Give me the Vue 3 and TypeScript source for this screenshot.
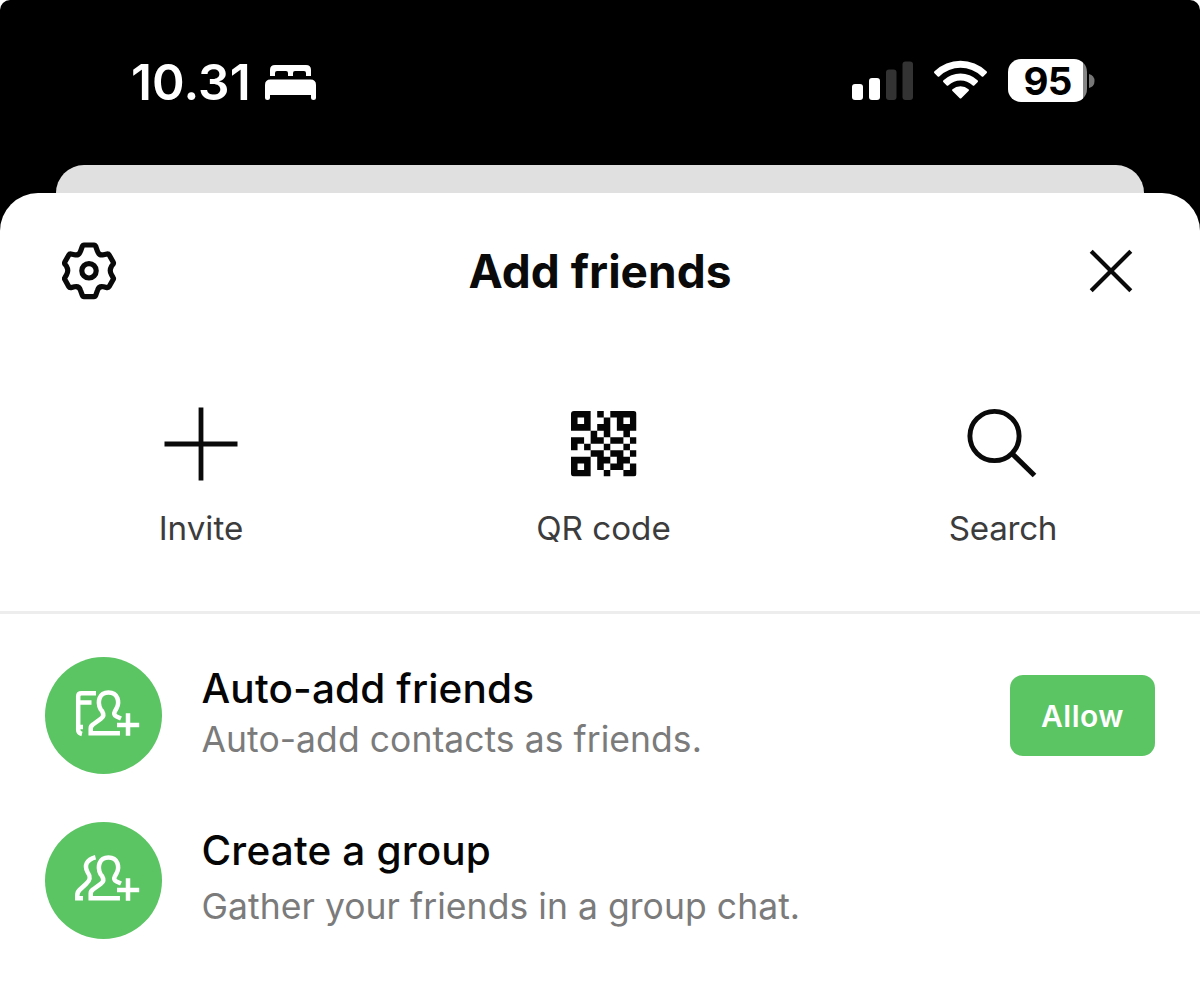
<script setup lang="ts">
interface Row {
  icon: 'book' | 'group'
  title: string
  text: string
  action?: string
}

const rows: Row[] = [
  { icon: 'book', title: 'Auto-add friends', text: 'Auto-add contacts as friends.', action: 'Allow' },
  { icon: 'group', title: 'Create a group', text: 'Gather your friends in a group chat.' },
]

const qrPattern = [
  '###.#.####',
  '#.#..#.#.#',
  '###.##.###',
  '...#.#..#.',
  '##.##.##.#',
  '#.#..#..#.',
  '...##.##.#',
  '###.##.##.',
  '#.#.#.##.#',
  '###..#..##',
]
const qrPath = qrPattern
  .flatMap((line, y) => [...line].map((c, x) => (c === '#' ? `M${x} ${y}h1v1h-1z` : '')))
  .join('')
</script>

<template>
  <div class="screen">
    <header class="status">
      <div class="clock">
        <span class="time">10.31</span>
        <svg class="bed" width="52" height="37" viewBox="0 0 52 37">
          <path fill="#fff" d="M5 12V6Q5 1 10 1H41Q46 1 46 6V12H41V9Q41 7 39 7H30Q28 7 28 9V12H23V9Q23 7 21 7H12Q10 7 10 9V12ZM0 33.500V21Q0 15.500 5.500 15.500H45.500Q51 15.500 51 21V33.500Q51 36 48.500 36T46 33.500V31H5V33.500Q5 36 2.500 36T0 33.500Z" />
        </svg>
      </div>
      <div class="signals">
        <svg width="62" height="40" viewBox="0 0 62 40">
          <rect x="0" y="23" width="11" height="16" rx="3" fill="#fff" />
          <rect x="17" y="17" width="11" height="22" rx="3" fill="#fff" />
          <rect x="34" y="8.500" width="10.500" height="30.500" rx="3" fill="#333" />
          <rect x="50.500" y="0.500" width="10.500" height="38.500" rx="3" fill="#333" />
        </svg>
        <svg class="wifi" width="54" height="40" viewBox="0.500 0 54 40">
          <path fill="#fff" d="M1 13.200Q0 12.200 1 11.200A37.500 37.500 0 0 1 53 11.200Q54 12.200 53 13.200L50 16.200Q49 17.200 48 16.200A30.500 30.500 0 0 0 6 16.200Q5 17.200 4 16.200ZM10 22.200Q9 21.200 10 20.200A25 25 0 0 1 44 20.200Q45 21.200 44 22.200L41 25.200Q40 26.200 39 25.200A17.500 17.500 0 0 0 15 25.200Q14 26.200 13 25.200ZM19 31Q18 30 19 29.200A12 12 0 0 1 35 29.200Q36 30 35 31L28 38Q27 39 26 38Z" />
        </svg>
        <div class="battery"><span>95</span></div>
        <svg class="cap" width="6" height="14" viewBox="0 0 6 14"><path fill="#777" d="M0 0Q5.500 1.500 5.500 7T0 14Z" /></svg>
      </div>
    </header>
    <div class="behind"></div>
    <main class="sheet">
      <div class="titlebar">
        <svg class="gear" width="55" height="58" viewBox="0.500 0.200 55 58" fill="none" stroke="#0a0a0a" stroke-width="5.200" stroke-linejoin="round">
          <path d="M22.500 3.200H32.500Q33.700 3.200 34.200 4.500L36 9.500Q37.500 14 42 13L45.500 12.200Q47 12 47.700 13.200L51.800 20.500Q52.300 21.500 51.500 22.500L50 24.500Q47.500 28.700 50 33L51.500 35.500Q52.300 36.500 51.800 37.500L47.700 44.800Q47 46 45.500 45.800L42 45Q37.500 44 36 48.500L34.200 53.500Q33.700 54.800 32.500 54.800H22.500Q21.300 54.800 20.800 53.500L19 48.500Q17.500 44 13 45L9.500 45.800Q8 46 7.300 44.800L3.200 37.500Q2.700 36.500 3.500 35.500L5 33Q7.500 28.700 5 24.500L3.500 22.500Q2.700 21.500 3.200 20.500L7.300 13.200Q8 12 9.500 12.200L13 13Q17.500 14 19 9.500L20.800 4.500Q21.300 3.200 22.500 3.200Z" />
          <circle cx="27.500" cy="29" r="7.200" />
        </svg>
        <h1>Add friends</h1>
        <svg class="close" width="44" height="44" viewBox="0 0 44 44" stroke="#0a0a0a" stroke-width="4.200">
          <path d="M2.200 2.200L41.800 41.800M41.800 2.200L2.200 41.800" />
        </svg>
      </div>
      <nav class="tools">
        <div class="tool">
          <svg width="74" height="74" viewBox="0 0 74 74" stroke="#0a0a0a" stroke-width="4.800"><path d="M37 0.500V73.500M0.500 37H73.500" /></svg>
          <span>Invite</span>
        </div>
        <div class="tool qr">
          <svg width="74" height="74" viewBox="0 0 74 74">
            <defs><clipPath id="qr-round"><rect x="4" y="4" width="65.500" height="65.500" rx="3" /></clipPath></defs>
            <g clip-path="url(#qr-round)"><path transform="translate(4 4) scale(6.550)" :d="qrPath" fill="#050505" /></g>
          </svg>
          <span>QR code</span>
        </div>
        <div class="tool search">
          <svg width="74" height="74" viewBox="0.500 0 74 74" fill="none" stroke="#0a0a0a" stroke-width="4.900"><circle cx="29" cy="29" r="24.600" /><path d="M46.500 46.500L69 68.500" stroke-width="5.200" /></svg>
          <span>Search</span>
        </div>
      </nav>
      <section class="list">
        <article v-for="row in rows" :key="row.title" class="row" :class="row.icon">
          <svg class="avatar" width="117" height="117" viewBox="0.500 0.500 117 117" fill="none" stroke="#fff" stroke-width="4.500">
            <circle cx="59" cy="59" r="58.500" fill="#5bc463" stroke="none" />
            <path v-if="row.icon === 'book'" d="M51.500 36.800H37Q33.700 36.800 33.700 40V73.500Q33.700 76.500 37.500 77.500M35 46H47M34 70.500H38.500" />
            <path v-else d="M51 35.700C42 38 39.500 44 43 50.500C46.500 55.500 46 58.500 41.500 62.500L35 68.500Q32.800 70.500 32.800 74V76.800H38.500" />
            <path d="M75.500 76.800H46.200V72Q46.200 69.500 48.500 68L56.500 62.200Q60.500 59.500 57.500 54.500L56 52.500C52.500 45.500 54.500 36 64 36S75.500 45.500 72 52L70.500 54.500Q68.500 58.500 72 60L76.500 62M83.500 56.800V79.200M72.500 68.500H94.700" />
          </svg>
          <div class="copy">
            <h2>{{ row.title }}</h2>
            <p>{{ row.text }}</p>
          </div>
          <button v-if="row.action" class="allow">{{ row.action }}</button>
        </article>
      </section>
    </main>
  </div>
</template>

<style>
body { margin: 0; background: #fff; }
</style>

<style scoped>
.screen { width: 1200px; height: 989px; background: #000; overflow: hidden; border-radius: 10px 10px 0 0; display: flex; flex-direction: column; font-family: Inter, "Liberation Sans", sans-serif; color: #0a0a0a; }
.screen svg { display: block; flex: none; }
.status { height: 165px; display: flex; justify-content: space-between; align-items: flex-start; padding: 0 105px 0 131px; box-sizing: border-box; color: #fff; }
.clock { display: flex; padding-top: 52px; }
.time { width: 134px; font-size: 49.500px; line-height: 60px; font-weight: 600; letter-spacing: 0.100px; }
.bed { margin-top: 12px; }
.signals { display: flex; padding-top: 59px; }
.signals > svg:first-child { margin-top: 2px; }
.wifi { margin: 1px 0 0 20px; }
.battery { margin-left: 20px; width: 79px; height: 43px; box-sizing: border-box; border-radius: 13px; background: linear-gradient(90deg, #fff 75px, #858585 75px); color: #000; font-size: 38.500px; line-height: 44px; font-weight: 700; text-align: center; letter-spacing: -0.800px; }
.cap { margin: 15px 0 0 2px; }
.behind { height: 28px; margin: 0 56px; background: #e0e0e0; border-radius: 28px 28px 0 0; flex: none; }
.sheet { flex: 1; background: #fff; border-radius: 38px 38px 0 0; }
.titlebar { height: 156px; display: flex; align-items: center; justify-content: space-between; padding: 0 67px 0 62px; }
h1, h2, p { margin: 0; font-weight: 400; }
h1 { font-size: 46px; line-height: 60px; font-weight: 700; margin-right: 6px; }
.tools { height: 265px; display: flex; justify-content: space-between; padding: 58px 94px 0 98px; box-sizing: border-box; border-bottom: 3px solid #ededed; }
.tool { width: 206px; display: flex; flex-direction: column; align-items: center; font-size: 33.200px; line-height: 42px; color: #3c3c3c; }
.tool.qr { margin-left: 3px; }
.tool.search { letter-spacing: -0.300px; }
.tool span { margin-top: 26px; white-space: nowrap; }
.list { padding: 43px 45px 0; }
.row { height: 117px; display: flex; align-items: flex-start; margin-bottom: 48px; }
.copy { flex: 1; margin-left: 39.500px; white-space: nowrap; }
h2 { font-size: 40.500px; line-height: 50px; font-weight: 500; color: #050505; padding-top: 7px; letter-spacing: 0.150px; }
p { font-size: 35.500px; line-height: 44px; color: #7b7b7b; padding-top: 4px; letter-spacing: 0.050px; }
.group h2 { padding-top: 4px; }
.group p { padding-top: 9px; }
.allow { width: 145px; height: 81px; margin-top: 18px; padding: 1px 0 0; border: 0; border-radius: 13px; background: #5bc463; color: #fff; font: 600 30px/80px Inter, sans-serif; letter-spacing: 0.500px; }
</style>
